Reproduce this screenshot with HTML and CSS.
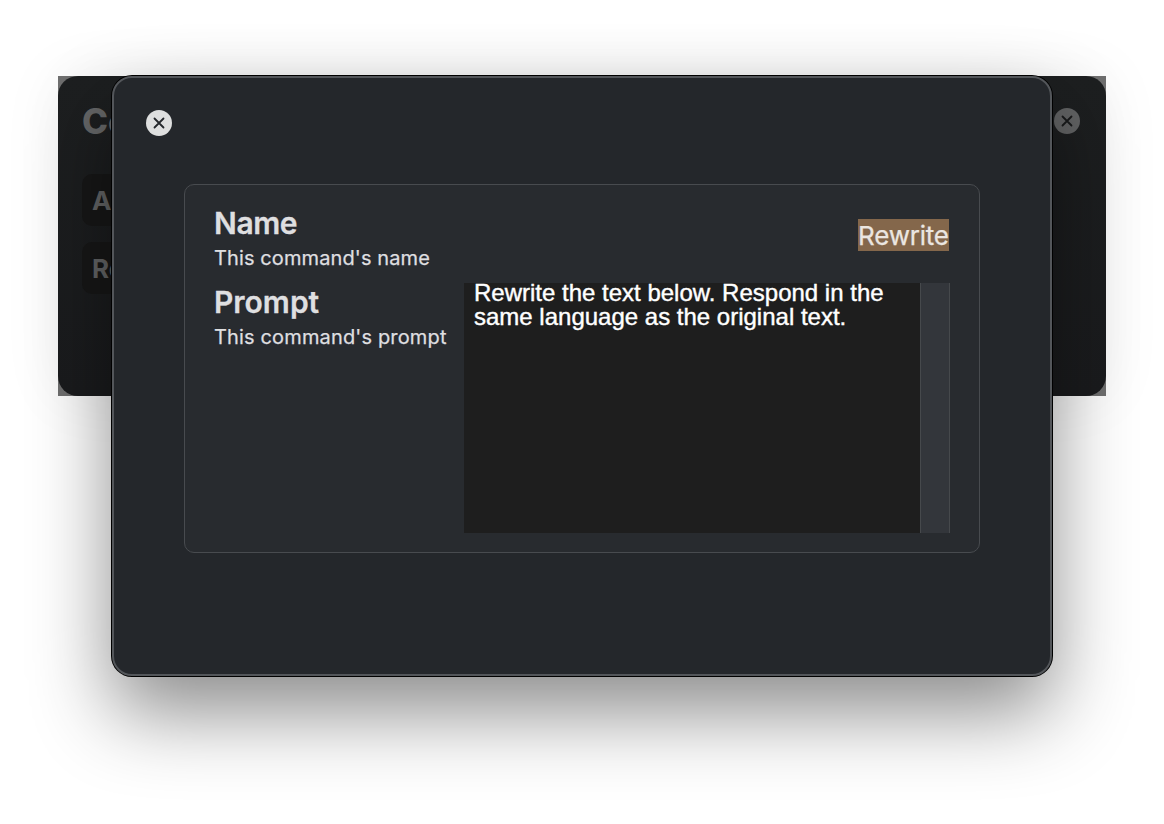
FILE: index.html
```html
<!DOCTYPE html>
<html lang="en">
<head>
<meta charset="utf-8">
<title>Command</title>
<link rel="stylesheet" href="styles.css">
</head>
<body>
<div class="desktop">
  <section class="window">
    <div class="surface">
      <header class="window-head">
        <h1 class="window-title">Co</h1>
        <svg class="close close-dim" viewBox="0 0 26 26"><circle cx="13" cy="13" r="13"/><path d="M8.5 8.5l9 9M17.5 8.5l-9 9"/></svg>
      </header>
      <div class="command">A</div>
      <div class="command">Re</div>
    </div>
  </section>
  <main class="modal">
    <svg class="close" viewBox="0 0 26 26"><circle cx="13" cy="13" r="13"/><path d="M8.5 8.5l9 9M17.5 8.5l-9 9"/></svg>
    <div class="group">
      <div class="row row-name">
        <div class="label">
          <h2 class="name">Name</h2>
          <p class="hint hint-name">This command's name</p>
        </div>
        <span class="field">Rewrite</span>
      </div>
      <div class="row row-prompt">
        <div class="label">
          <h2 class="prompt">Prompt</h2>
          <p class="hint hint-prompt">This command's prompt</p>
        </div>
        <div class="editor">
          <div class="text">Rewrite the text below. Respond in the<br>same language as the original text.</div>
          <div class="track"></div>
        </div>
      </div>
    </div>
  </main>
</div>
</body>
</html>
```
FILE: styles.css
```css
* { box-sizing: border-box; }
body, h1, h2, p { margin: 0; }
body { background: #fff; font-family: Inter, "Liberation Sans", sans-serif; overflow: hidden; }
.desktop { position: relative; width: 1164px; height: 824px; }

/* The window dimmed behind the sheet */
.window { position: absolute; left: 58px; top: 76px; width: 1048px; height: 320px; background: #6e6e6e; box-shadow: 0 0 60px rgba(0,0,0,.06); }
.surface { height: 320px; padding: 24px; border-radius: 20px; background: linear-gradient(#1d1f20, #1a1b1d); }
.window-head { display: flex; justify-content: space-between; align-items: center; height: 42px; margin-bottom: 32px; }
.window-title { font-size: 35px; font-weight: 800; line-height: 42px; color: #656667; }
.window-head .close { margin: 0 2px 0 0; }
.command { width: 900px; height: 52px; margin-bottom: 16px; padding-left: 10px; border-radius: 10px; background: #171717; color: #646566; font-size: 26px; font-weight: 700; line-height: 54px; }

.close { display: block; width: 26px; height: 26px; }
.close circle { fill: #dedfdf; }
.close path { fill: none; stroke: #24272b; stroke-width: 1.8; stroke-linecap: round; }
.close-dim circle { fill: #626364; }
.close-dim path { stroke: #191a1b; }

/* Command editing sheet */
.modal { position: absolute; left: 112px; top: 76px; width: 940px; height: 600px; padding: 32px 70px; border: 2px solid #53565a; border-radius: 20px; background: #24272b; box-shadow: 0 0 0 1px #000, 0 36px 80px rgba(0,0,0,.46); }
.modal > .close { margin-left: -38px; }
.group { width: 796px; height: 369px; margin-top: 48px; padding: 20px 29px 0; border: 1px solid #484b4f; border-radius: 10px; background: #282b2f; }
.row { display: flex; justify-content: space-between; }
.row-name { height: 78px; }
.label { color: #dfdfe0; white-space: nowrap; }
.label h2 { font-size: 30px; font-weight: 600; line-height: 36px; -webkit-text-stroke: .3px #dfdfe0; }
.name { letter-spacing: -.4px; }
.prompt { letter-spacing: 0; }
.hint { margin-top: 4px; font-size: 20px; line-height: 26px; -webkit-text-stroke: .25px #dfdfe0; }
.hint-name { letter-spacing: .11px; }
.hint-prompt { letter-spacing: .15px; }
.field { width: 91px; margin: 14px 1px 0 0; height: 32px; background: #84674b; color: #ebe6e1; font-size: 26px; line-height: 33px; letter-spacing: -.2px; white-space: nowrap; -webkit-text-stroke: .25px #ebe6e1; }
.row-prompt .label { padding-top: 1px; }
.editor { display: flex; width: 486px; height: 250px; background: #1e1e1e; }
.text { width: 456px; height: 52px; padding-left: 10px; margin-top: -2px; color: #fff; font: 24px/24px "Liberation Sans", sans-serif; white-space: nowrap; -webkit-text-stroke: .4px #fff; }
.track { width: 30px; border-left: 1px solid #46494c; border-right: 1px solid #46494c; background: #33363b; }
```
